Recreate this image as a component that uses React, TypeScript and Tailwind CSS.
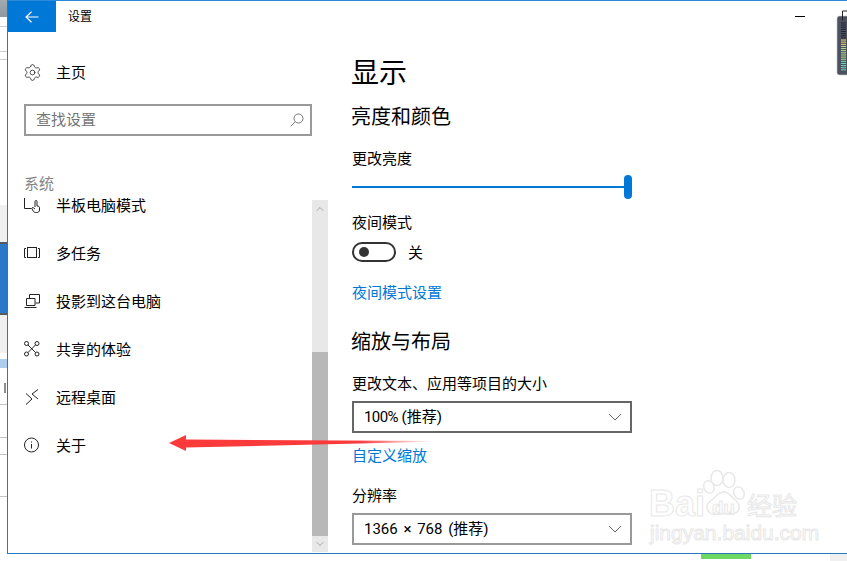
import React from "react";
import { Settings, ChevronUp, ChevronDown } from "lucide-react";

const font = "font-['Open_Sans','Noto_Sans_CJK_SC',sans-serif]";

function Chevron() {
  return (
    <svg width="14" height="8" viewBox="0 0 14 8" fill="none" stroke="#666" strokeWidth="1">
      <path d="M1 1l6 6 6-6" />
    </svg>
  );
}

function Dropdown({ children, border }: { children: React.ReactNode; border: string }) {
  return (
    <div className={`w-[280px] h-8 border-2 ${border} flex items-center justify-between pl-[10px] pr-[8px] text-[15px] text-black`}>
      <span className="font-['Roboto','Noto_Sans_CJK_SC',sans-serif]">{children}</span>
      <Chevron />
    </div>
  );
}

const iconProps = { width: 16, height: 16, viewBox: "0 0 16 16", fill: "none", stroke: "#222", strokeWidth: 1 };

const items: [string, React.ReactNode][] = [
  ["半板电脑模式", <svg {...iconProps}><path d="M.5 1v10.500h7" /><path d="M11 10V4.500a1 1 0 0 1 2 0V9l1.500.3c.7.2 1 .7 1 1.400V13c0 1.700-1.300 2.500-2.800 2.500H11.500c-1 0-1.700-.5-2.200-1.300L8 11.800c-.4-.8.4-1.500 1.200-1.200L11 12" /></svg>],
  ["多任务", <svg {...iconProps}><path d="M2 3.500H.5v9H2M14 3.500h1.500v9H14" /><rect x="3.500" y="2.500" width="9" height="10" /></svg>],
  ["投影到这台电脑", <svg {...iconProps}><path d="M5.500 5V1.500h10v8.500H11.500" /><path d="M2.500 5.500h8.500v7H2.500zM.5 14.500h12" /></svg>],
  ["共享的体验", <svg {...iconProps}><circle cx="2.500" cy="2.500" r="2" /><circle cx="13" cy="2.500" r="2" /><circle cx="2.500" cy="13" r="2" /><circle cx="13" cy="13" r="2" /><path d="M4 4l7.500 7.500M11.500 4L4 11.500" /></svg>],
  ["远程桌面", <svg {...iconProps}><path d="M2 4.500L8 10l-6 5.500M14 .5L8 5l6 5" /></svg>],
  ["关于", <svg {...iconProps}><circle cx="7.500" cy="8" r="7" /><path d="M7.500 7v4.500M7.500 4.500v1" /></svg>],
];

function Strip() {
  return (
    <div className="w-[7px] shrink-0 h-[561px] flex flex-col bg-white">
      <div className="h-[17px] bg-gradient-to-b from-[#a3abb0] to-[#8f989e]" />
      <div className="h-[9px]" />
      <div className="h-px bg-[#cccccc]" />
      <div className="h-6" />
      <div className="h-px bg-[#cccccc]" />
      <div className="h-[7px]" />
      <div className="h-px bg-[#cccccc]" />
      <div className="h-[145px]" />
      <div className="h-[37px] bg-[#f0f0f0]" />
      <div className="h-[2px] bg-[#555b60]" />
      <div className="h-[69px] bg-[#2a78c9]" />
      <div className="h-[2px] bg-[#555b60]" />
      <div className="h-[38px] bg-[#f0f0f0]" />
      <div className="h-[5px]" />
      <div className="h-[9px] mt-[1px] bg-[#8ab8e6] opacity-70" />
      <div className="h-[15px]" />
      <div className="h-[10px] w-[2px] ml-[4px] bg-[#8f8f8f]" />
      <div className="h-[11px]" />
      <div className="h-px bg-[#c4c4c4]" />
      <div className="h-8" />
      <div className="h-px bg-[#c4c4c4]" />
      <div className="h-4" />
      <div className="h-px bg-[#c4c4c4]" />
      <div className="h-[41px]" />
      <div className="h-px bg-[#c4c4c4]" />
    </div>
  );
}

function LeftPane() {
  return (
    <div className="w-[320px] shrink-0 flex flex-col min-h-0">
      <div className="mt-4 h-12 flex items-center pl-[15px]">
        <Settings size={19} strokeWidth={1} color="#222" />
        <span className="ml-[14px] text-[15px] text-black">主页</span>
      </div>
      <div className="mt-2 ml-4 w-[288px] h-8 border-2 border-[#999999] flex items-center justify-between pl-[10px] pr-[6px] text-[15px] text-[#767676]">
        <span className="pb-[2px]">查找设置</span>
        <svg width="14" height="14" viewBox="0 0 14 14" fill="none" stroke="#777" strokeWidth="1">
          <circle cx="8.500" cy="5.500" r="4.500" />
          <path d="M5.200 8.800L.7 13.300" />
        </svg>
      </div>
      <div className="mt-[37px] pl-4 h-5 leading-5 text-[15px] text-[#848484]">系统</div>
      <div className="mt-1 flex-1 min-h-0 flex">
        <div className="flex-1">
          {items.map(([label, icon], i) => (
            <div key={label} className={i === 0 ? "h-4 mb-4 flex items-center pl-4" : "h-12 flex items-center pl-4"}>
              <span className="w-4 flex justify-center">{icon}</span>
              <span className="ml-4 text-[15px] leading-[15px] text-black">{label}</span>
            </div>
          ))}
        </div>
        <div className="w-4 mt-[3px] mb-px bg-[#e8e8e8] flex flex-col">
          <div className="h-[17px] flex items-center justify-center">
            <ChevronUp size={12} strokeWidth={1} color="#666" />
          </div>
          <div className="h-[135px]" />
          <div className="h-[184px] bg-[#b8b8b8]" />
          <div className="h-4 flex items-center justify-center">
            <ChevronDown size={12} strokeWidth={1} color="#666" />
          </div>
        </div>
      </div>
    </div>
  );
}

function RightPane() {
  return (
    <div className="pl-6 flex flex-col text-black">
      <div className="mt-5 -ml-px h-10 leading-10 text-[28px]">显示</div>
      <div className="mt-[11px] -ml-px h-7 leading-7 text-[20px]">亮度和颜色</div>
      <div className="mt-[17px] h-5 leading-5 text-[15px]">更改亮度</div>
      <div className="mt-[7px] w-[280px] h-6 flex items-center">
        <div className="flex-1 h-[2px] bg-[#0078d7]" />
        <div className="w-2 h-6 rounded-full bg-[#0078d7]" />
      </div>
      <div className="mt-[13px] h-5 leading-5 text-[15px]">夜间模式</div>
      <div className="mt-[10px] h-5 flex items-center">
        <div className="w-11 h-5 rounded-full border-2 border-[#333333] flex items-center pl-[5px]">
          <div className="w-[10px] h-[10px] rounded-full bg-[#333333]" />
        </div>
        <span className="ml-3 text-[15px]">关</span>
      </div>
      <div className="mt-5 h-5 leading-5 text-[15px] text-[#0078d7]">夜间模式设置</div>
      <div className="mt-[26px] -ml-px h-7 leading-7 text-[20px]">缩放与布局</div>
      <div className="mt-[17px] h-5 leading-5 text-[15px]">更改文本、应用等项目的大小</div>
      <div className="mt-2">
        <Dropdown border="border-[#666666]"><span className="tracking-[-0.6px]">100%</span> (推荐)</Dropdown>
      </div>
      <div className="mt-3 h-5 leading-5 text-[15px] text-[#0078d7]">自定义缩放</div>
      <div className="mt-5 h-5 leading-5 text-[15px]">分辨率</div>
      <div className="mt-2">
        <Dropdown border="border-[#999999]"><span className="[word-spacing:2px]">1366 × 768 (推荐)</span></Dropdown>
      </div>
    </div>
  );
}

function Overlays() {
  return (
    <>
      <svg className="absolute left-[165px] top-[432px]" width="272" height="22" viewBox="0 0 272 22">
        <defs>
          <linearGradient id="fade" x1="0" x2="1" y1="0" y2="0">
            <stop offset="0" stopColor="#fb3a3c" />
            <stop offset="0.72" stopColor="#fb3a3c" />
            <stop offset="1" stopColor="#fb3a3c" stopOpacity="0" />
          </linearGradient>
        </defs>
        <path d="M4 11L21 3v4.500L268 9v.8L21 15.500V19z" fill="url(#fade)" />
      </svg>
      <svg className="absolute left-[836px] top-[10px]" width="11" height="66" viewBox="0 0 11 66">
        <rect x="1" y="6" width="14" height="59" rx="2.500" fill="#4d5261" stroke="#c7c9cf" strokeWidth="0.6" />
        <path d="M6.500 10.500V1h5" fill="none" stroke="#222" />
        {Array.from({ length: 23 }).map((_, i) => (
          <rect key={i} x="5" y={12.5 + i * 2.13} width="5" height="1"
            fill={i < 8 ? "#23262e" : i < 11 ? "#e8d86a" : i < 18 ? "#b5e28a" : "#6fdcb8"} />
        ))}
      </svg>
      <div className="absolute left-[701px] top-[554px] w-[50px] h-[5px] bg-[#6fd865]" />
      <div className="absolute left-[830px] top-[554px] w-[17px] h-[7px] bg-[#f0f0f0]" />
      <div className="absolute left-[649px] top-[486px] h-9 leading-9 text-[36px] font-bold text-white [-webkit-text-stroke:1px_#e8e8e8] font-['Liberation_Sans',sans-serif]">Bai</div>
      <svg className="absolute left-[700px] top-[470px]" width="60" height="54" viewBox="0 0 60 54" fill="#fff" stroke="#e8e8e8" strokeWidth="1.500">
        <ellipse cx="17" cy="8" rx="6" ry="7.500" />
        <ellipse cx="29" cy="10" rx="6" ry="7.500" />
        <ellipse cx="9" cy="17" rx="5" ry="6.500" transform="rotate(-25 9 17)" />
        <ellipse cx="39" cy="23" rx="5" ry="6.500" transform="rotate(-25 39 23)" />
        <path d="M24 22c5 0 7 4 10 7 4 3 6 6 5 10-1 4-6 6-11 5-3-.6-6-.6-9 0-6 1-11-1-12-6-.5-4 2-6 6-9 4-3 5-7 11-7z" />
      </svg>
      <div className="absolute left-[712px] top-[498px] h-5 leading-5 text-[19px] font-bold text-white [-webkit-text-stroke:1px_#e8e8e8] font-['Liberation_Sans',sans-serif]">du</div>
      <div className="absolute left-[747px] top-[491px] h-7 leading-7 text-[25px] text-white [-webkit-text-stroke:1px_#e8e8e8]">经验</div>
      <div className="absolute left-[650px] top-[521px] h-6 leading-6 text-[21px] text-white [-webkit-text-stroke:1px_#e8e8e8] font-['Liberation_Sans',sans-serif]">jingyan.baidu.com</div>
    </>
  );
}

export default function App() {
  return (
    <div className={`relative w-[847px] h-[561px] overflow-hidden bg-white flex ${font}`}>
      <Strip />
      <div className="w-[840px] h-[554px] shrink-0 border-l border-b border-t border-l-[#2479c4] border-b-[#2479c4] border-t-[#2b8ad8] flex flex-col">
        <div className="h-[31px] shrink-0 flex items-center">
          <div className="w-12 h-[31px] bg-[#0078d7] flex items-center justify-center">
            <svg width="14" height="12" viewBox="0 0 14 12" fill="none" stroke="#fff" strokeWidth="1.200">
              <path d="M1 6h12.500M6.500 .7L1 6l5.500 5.300" />
            </svg>
          </div>
          <span className="ml-3 text-[12px] text-black">设置</span>
          <div className="ml-auto mr-[42px] w-[10px] h-px bg-black" />
        </div>
        <div className="flex-1 min-h-0 flex">
          <LeftPane />
          <RightPane />
        </div>
      </div>
      <Overlays />
    </div>
  );
}
